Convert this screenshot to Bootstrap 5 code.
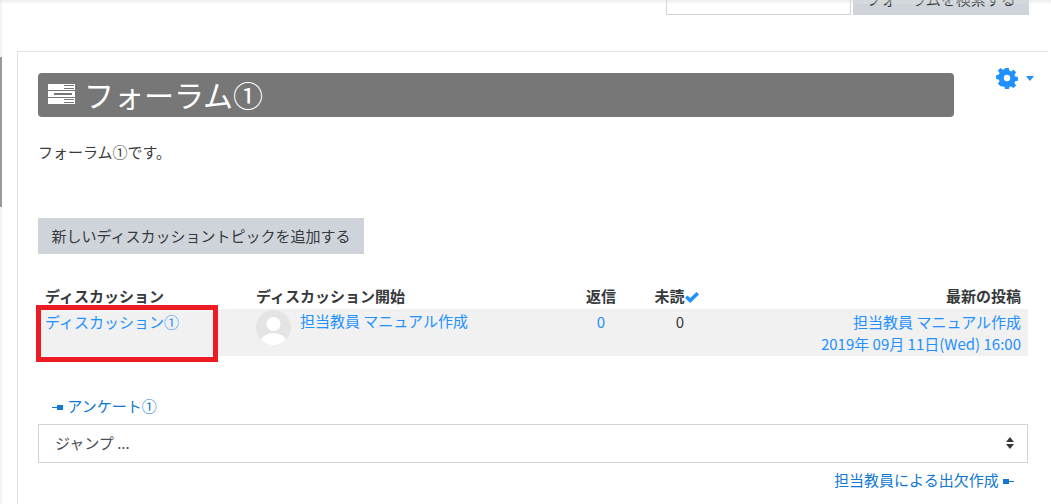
<!DOCTYPE html>
<html lang="ja">
<head>
<meta charset="utf-8">
<title>フォーラム①</title>
<link href="https://cdn.jsdelivr.net/npm/bootstrap@5.3.0/dist/css/bootstrap.min.css" rel="stylesheet">
<style>
html,body{height:504px;overflow:hidden}
body{font-family:"Noto Sans CJK JP","Liberation Sans",sans-serif;font-size:15px;color:#373a3c;background:#fff;position:relative}
.topshade{position:absolute;left:0;right:0;top:0;height:4px;background:linear-gradient(rgba(220,220,220,.5),rgba(240,240,240,.2));z-index:5}
.sideshade{position:absolute;left:0;top:0;width:2px;height:504px;background:#f3f3f3}
.sidebarline{position:absolute;left:0;top:57px;width:2px;height:150px;background:#999}
.pagewrap{margin-top:-23px;padding-right:3px;padding-left:17px}
.searchrow{height:38px;padding-right:19px;margin-bottom:36px;gap:2px}
.searchbox{width:185px;height:38px;border:1px solid #ced4da;border-radius:0;background:#fff}
.btn-moo{background:#ced4da;color:#373a3c;border:0;border-radius:0;font-size:15px;line-height:22px}
.searchbtn{width:176px;height:38px;padding:5px 0 0}
.mainbox{border:1px solid #e2e2e2;border-bottom:0;border-right:0;padding:21px 19px 0 20px;height:453px}
.titlerow{height:44px;margin-bottom:24px}
.titlebar{width:916px;height:44px;background:#777;border-radius:4px;color:#fff;font-size:30px;line-height:44px;padding:0 0 2px 10px;gap:8px;font-weight:400;margin:0}
.gearbtn{margin-top:-5px;gap:8px;height:20px;margin-right:-5px}
.intro{line-height:22px;margin:0 0 55px}
.addbtn{height:36px;width:326px;padding:7px 0;display:block;margin-bottom:31px}
.disctable{width:990px;margin-bottom:0;table-layout:fixed;--bs-table-bg:transparent}
.disctable th{font-weight:700;font-size:15px;line-height:22px;padding:0 7px 2px;border:0;color:#373a3c}
.disctable th.unreadhead{padding:0 7px 2px 0}
.disctable td{background:#f1f1f1;border:0;padding:2px 7px 0;height:47px;vertical-align:top;line-height:22px;color:#373a3c}
.disctable a,.gearbtn{color:#1e90ff;text-decoration:none}
.avatarcell{gap:9px;margin-top:-1px}
.avatarcell svg{flex:none}
.discwrap{position:relative}
.redframe{position:absolute;left:-2px;top:20px;width:182px;height:57px;border:5px solid #ed1c24;pointer-events:none}
.prevlink,.nextlink{color:#1177d1;text-decoration:none;line-height:22px}
.prevline{padding-left:14px;margin-top:39px;margin-bottom:6px}
.jumpselect{width:990px;height:39px;border-radius:0;border-color:#ced4da;color:#495057;font-size:15px;padding:0 16px 1px;line-height:36px;
background-image:url("data:image/svg+xml,%3Csvg xmlns='http://www.w3.org/2000/svg' width='10' height='12'%3E%3Cpath fill='%23373a3c' d='M5 0l4 5H1zM5 12L1 7h8z'/%3E%3C/svg%3E");background-size:10px 12px;background-position:right 12px center}
.nextline{width:990px;padding-right:14px;margin-top:6px}
</style>
</head>
<body>
<div class="topshade"></div>
<div class="sideshade"></div>
<div class="sidebarline"></div>
<div class="pagewrap">
  <div class="searchrow d-flex justify-content-end">
    <div class="searchbox"></div>
    <button class="btn btn-moo searchbtn" type="button">フォーラムを検索する</button>
  </div>
  <div class="mainbox">
    <div class="titlerow d-flex justify-content-between">
      <h2 class="titlebar d-flex align-items-center">
        <svg width="28" height="20" viewBox="0 0 28 20" fill="#fff"><path d="M0 0h27v6H0zM0 7h27v6H0zM0 14h27v6H0z"/><path fill="#777" d="M16 1h10v1H16zM16 4h10v1H16zM6 9h18v2H6zM16 15h10v1H16zM16 18h10v1H16z"/></svg>
        <span>フォーラム①</span>
      </h2>
      <a class="gearbtn d-flex align-items-center" href="#">
        <svg width="22" height="22" viewBox="0 0 22 22"><path fill="#1e90ff" fill-rule="evenodd" d="M9 0h4l.6 3 2 .8L18.200 2l2.800 2.800-1.800 2.600.8 2 3 .6v4l-3 .6-.8 2 1.800 2.600-2.800 2.800-2.600-1.800-2 .8-.6 3H9l-.6-3-2-.8L3.800 20 1 17.200l1.800-2.600-.8-2-3-.6v-4l3-.6.8-2L1 2.800 3.800 0l2.600 1.800 2-.8zM11 7.500a3.500 3.500 0 1 0 0 7 3.500 3.500 0 0 0 0-7z" transform="translate(1 1) scale(.91)"/></svg>
        <svg width="8" height="5" viewBox="0 0 8 5"><path fill="#1e90ff" d="M0 0h8L4 5z"/></svg>
      </a>
    </div>
    <p class="intro">フォーラム①です。</p>
    <button class="btn btn-moo addbtn" type="button">新しいディスカッショントピックを追加する</button>
    <div class="discwrap">
      <table class="table disctable">
        <colgroup><col style="width:211px"><col style="width:303px"><col style="width:98px"><col style="width:60px"><col></colgroup>
        <thead>
          <tr>
            <th>ディスカッション</th>
            <th>ディスカッション開始</th>
            <th class="text-center">返信</th>
            <th class="text-center text-nowrap unreadhead">未読<svg width="14" height="11" viewBox="0 0 14 11"><path fill="#1e90ff" d="M0 6l2.500-2.500L5.200 6 11.500 0 14 2.500 5.200 11z"/></svg></th>
            <th class="text-end">最新の投稿</th>
          </tr>
        </thead>
        <tbody>
          <tr>
            <td><a href="#">ディスカッション①</a></td>
            <td>
              <div class="avatarcell d-flex">
                <svg width="35" height="35" viewBox="0 0 35 35"><defs><clipPath id="avclip"><circle cx="17.500" cy="17.500" r="17.500"/></clipPath></defs><circle cx="17.500" cy="17.500" r="17.500" fill="#e4e4e4"/><g clip-path="url(#avclip)" fill="#fff"><circle cx="17.500" cy="14" r="7"/><ellipse cx="17.500" cy="32" rx="13" ry="9"/></g></svg>
                <a href="#" class="text-nowrap">担当教員 マニュアル作成</a>
              </div>
            </td>
            <td class="text-center"><a href="#">0</a></td>
            <td class="text-center">0</td>
            <td class="text-end"><a href="#" class="d-block">担当教員 マニュアル作成</a><a href="#" class="d-block">2019年 09月 11日(Wed) 16:00</a></td>
          </tr>
        </tbody>
      </table>
      <div class="redframe"></div>
    </div>
    <div class="prevline">
      <a class="prevlink" href="#"><svg width="12" height="7" viewBox="0 0 12 7"><path fill="#1177d1" d="M0 3h5V1h6v5H5V4H0z"/></svg> アンケート①</a>
    </div>
    <select class="form-select jumpselect"><option>ジャンプ ...</option></select>
    <div class="nextline text-end">
      <a class="nextlink" href="#">担当教員による出欠作成 <svg width="12" height="7" viewBox="0 0 12 7"><path fill="#1177d1" d="M12 3H7V1H1v5h6V4h5z"/></svg></a>
    </div>
  </div>
</div>
<script src="https://cdn.jsdelivr.net/npm/bootstrap@5.3.0/dist/js/bootstrap.bundle.min.js"></script>
</body>
</html>
